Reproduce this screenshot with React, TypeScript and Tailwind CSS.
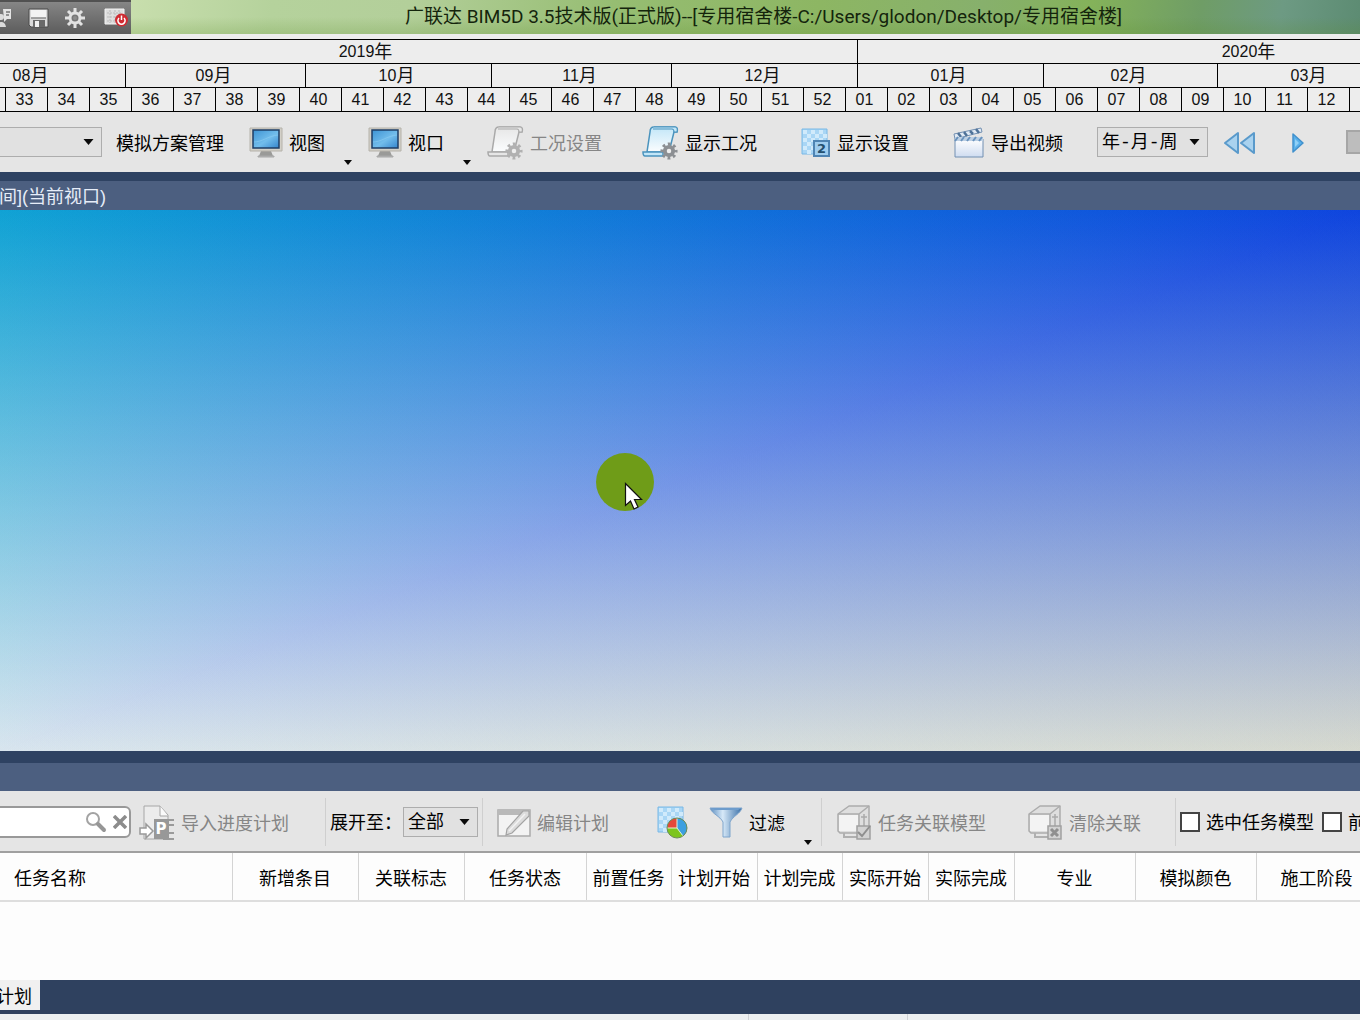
import React, { ReactNode, useState } from 'react';
import clsx from 'clsx';

const cjk = "font-['Liberation_Sans','Noto_Sans_CJK_SC',sans-serif]";

// one day is 6px wide on the timeline
const months = [
  { label: '08月', width: 'w-[186px]' },
  { label: '09月', width: 'w-[180px]' },
  { label: '10月', width: 'w-[186px]' },
  { label: '11月', width: 'w-[180px]' },
  { label: '12月', width: 'w-[186px]' },
  { label: '01月', width: 'w-[186px]' },
  { label: '02月', width: 'w-[174px]' },
  { label: '03月', width: 'w-[186px]' }
];

const weeks = [
  '32', '33', '34', '35', '36', '37', '38', '39', '40', '41', '42', '43', '44', '45', '46', '47', '48',
  '49', '50', '51', '52', '01', '02', '03', '04', '05', '06', '07', '08', '09', '10', '11', '12', '13'
];

const columns = [
  { label: '任务名称', width: 'w-[232px]', left: true },
  { label: '新增条目', width: 'w-[126px]' },
  { label: '关联标志', width: 'w-[106px]' },
  { label: '任务状态', width: 'w-[122px]' },
  { label: '前置任务', width: 'w-[85px]' },
  { label: '计划开始', width: 'w-[86px]' },
  { label: '计划完成', width: 'w-[85px]' },
  { label: '实际开始', width: 'w-[86px]' },
  { label: '实际完成', width: 'w-[86px]' },
  { label: '专业', width: 'w-[121px]' },
  { label: '模拟颜色', width: 'w-[121px]' },
  { label: '施工阶段', width: 'w-[121px]' }
];

function Gear({ cx, cy, r, color, hole }: { cx: number; cy: number; r: number; color: string; hole: string }) {
  const tooth = (2 * Math.PI * r) / 16;
  return (
    <g>
      <circle cx={cx} cy={cy} r={r} fill="none" stroke={color} strokeWidth={r * 0.45} strokeDasharray={tooth} strokeDashoffset={tooth / 2} />
      <circle cx={cx} cy={cy} r={r * 0.6} fill={hole} stroke={color} strokeWidth={r * 0.55} />
    </g>
  );
}

function PersonIcon() {
  return (
    <svg width="12" height="22" viewBox="0 0 12 22">
      <path d="M3 2h8v10H7l-3 3v-3" fill="#e4e4e4" />
      <path d="M6 5h4M6 8h3" stroke="#777" strokeWidth="1.5" />
      <circle cx="1" cy="10" r="3" fill="#dcdcdc" />
      <path d="M-4 20c0-5 9-8 10 0z" fill="#dcdcdc" />
    </svg>
  );
}

function SaveIcon() {
  return (
    <svg width="22" height="22" viewBox="0 0 22 22">
      <path d="M1 2h19v18H3l-2-2z" fill="#d9d9d9" stroke="#4a4a4a" />
      <path d="M3 3h15v8H3z" fill="#f3f3f3" />
      <path d="M3 11h15" stroke="#8a8a8a" strokeWidth="1.5" />
      <path d="M5 13h12v7H5z" fill="#696969" />
      <path d="M7 14h4v6H7z" fill="#efefef" />
    </svg>
  );
}

function SettingsIcon() {
  return (
    <svg width="22" height="22" viewBox="0 0 22 22">
      <path d="M11 1v20M1 11h20M4 4l14 14M18 4L4 18" stroke="#e2e2e2" strokeWidth="3" />
      <circle cx="11" cy="11" r="5" fill="#777" stroke="#e2e2e2" strokeWidth="3" />
      <circle cx="11" cy="11" r="2" fill="#8c8c8c" />
    </svg>
  );
}

function ExitIcon() {
  return (
    <svg width="24" height="22" viewBox="0 0 24 22">
      <path d="M1 2h19v15H1z" fill="#dedede" stroke="#f3f3f3" />
      <path d="M3 6h15M3 10h15M3 14h15M6 3v13M11 3v13M15 3v13" stroke="#bbb" strokeDasharray="2 1" />
      <circle cx="17.5" cy="13" r="6.5" fill="#cf2b32" />
      <path d="M15 11a3.6 3.6 0 1 0 5 0M17.5 8.5v4.5" fill="none" stroke="#fff" strokeWidth="1.5" />
    </svg>
  );
}

function MonitorIcon() {
  return (
    <svg width="34" height="32" viewBox="0 0 34 32">
      <defs>
        <linearGradient id="screen" x1="0" y1="0" x2="1" y2="1">
          <stop offset="0" stopColor="#3d93d3" />
          <stop offset="0.55" stopColor="#72bdec" />
          <stop offset="1" stopColor="#3484cc" />
        </linearGradient>
      </defs>
      <path d="M12 24h10l2 5H10z" fill="#9a9a98" />
      <path d="M9 29h16v1H9z" fill="#b8b8b8" stroke="#a8a8a8" />
      <path d="M1 1h32v23H1z" fill="#d3d0c8" stroke="#b5b2aa" />
      <path d="M4 3h26v18H4z" fill="url(#screen)" stroke="#1f3e66" strokeWidth="1.5" />
      <path d="M5 15c8 0 14-6 24-7" fill="none" stroke="#8dcdf2" opacity="0.6" />
    </svg>
  );
}

function ScrollIcon({ active }: { active?: boolean }) {
  const stroke = active ? '#4a93bd' : '#a9a9a9';
  const tint = active ? '#c2e6f8' : '#e6e6e6';
  const gradient = active ? 'scroll-on' : 'scroll-off';
  return (
    <svg width="37" height="34" viewBox="0 0 37 34">
      <defs>
        <linearGradient id={gradient} x1="0" y1="0" x2="0" y2="1">
          <stop offset="0" stopColor={tint} />
          <stop offset="1" stopColor="#fbfdfe" />
        </linearGradient>
      </defs>
      <path d="M12 1h21c2 0 3 2 2 5h-3l-5 20H5L8 6c0-3 1-5 4-5z" fill={`url(#${gradient})`} stroke={stroke} strokeWidth="1.5" />
      <path d="M12 1h21c2 0 3 2 2 5h-3c0-2-1-3-2-3H11" fill={tint} stroke={stroke} strokeWidth="1.200" />
      <path d="M1 26h20v4H3c-2 0-2-2-2-4z" fill={tint} stroke={stroke} strokeWidth="1.5" />
      <Gear cx={27} cy={25} r={7} color={active ? '#8c8f93' : '#b1b1b1'} hole="#eee" />
    </svg>
  );
}

function Checker() {
  return (
    <g>
      <path d="M1 1h25v25H1z" fill="#a9d6f5" stroke="#78b8e6" />
      {[0, 1, 2, 3, 4, 5].map(row =>
        [0, 1, 2].map(col => (
          <rect key={`${row}-${col}`} x={2 + col * 8 + (row % 2) * 4} y={2 + row * 4} width="4" height="4" fill="#d0eafb" />
        ))
      )}
    </g>
  );
}

function DisplaySettingsIcon() {
  return (
    <svg width="30" height="30" viewBox="0 0 30 30">
      <Checker />
      <path d="M13 13h15v15H13z" fill="#9fcdef" stroke="#4f84b3" strokeWidth="2" />
      <text x="20.5" y="25" textAnchor="middle" fontSize="13" fontWeight="700" fill="#24506f" className="font-['DejaVu_Sans',sans-serif]">
        2
      </text>
    </svg>
  );
}

function ColorSettingsIcon() {
  return (
    <svg width="32" height="34" viewBox="0 0 32 34">
      <Checker />
      <circle cx="20" cy="22" r="10" fill="#7cc51e" />
      <path d="M20 22V12a10 10 0 0 0-9.800 10z" fill="#e4483a" />
      <path d="M20 22V12a10 10 0 0 1 6 18z" fill="#3c9fe0" />
      <path d="M20 12v10l6 8M20 22H10" fill="none" stroke="#e6f2d8" />
      <circle cx="20" cy="22" r="10" fill="none" stroke="#6c8c5a" />
    </svg>
  );
}

function VideoIcon() {
  return (
    <svg width="32" height="32" viewBox="0 0 32 32">
      <defs>
        <linearGradient id="clap" x1="0" y1="0" x2="0" y2="1">
          <stop offset="0" stopColor="#fff" />
          <stop offset="1" stopColor="#cfdcf0" />
        </linearGradient>
      </defs>
      <path d="M1 7L28 1l1 4L2 12z" fill="#e1eaf4" stroke="#7390b2" />
      <path d="M5 6l3 4M11 5l3 4M17 4l3 3M23 2l3 4" stroke="#4f7298" strokeWidth="2.500" />
      <path d="M2 12h28v18H2z" fill="url(#clap)" stroke="#7390b2" />
      <path d="M2 10h28v4H2z" fill="#bdd0e4" />
      <path d="M5 10l-3 4M11 10l-3 4M17 10l-3 4M23 10l-3 4M29 10l-3 4" stroke="#6a93bd" strokeWidth="2" />
    </svg>
  );
}

function RewindIcon() {
  return (
    <svg width="32" height="24" viewBox="0 0 32 24">
      <path d="M14 2v20L1 12zM30 2v20L17 12z" fill="#a9d2ef" stroke="#5a9acb" strokeWidth="2" strokeLinejoin="round" />
    </svg>
  );
}

function PlayIcon() {
  return (
    <svg width="12" height="20" viewBox="0 0 12 20">
      <path d="M1 1l10 9L1 19z" fill="#58b0ea" stroke="#4191cd" strokeWidth="1.5" strokeLinejoin="round" />
      <path d="M3 6l4 4-4 4z" fill="#8fd0f7" />
    </svg>
  );
}

function SearchIcon() {
  return (
    <svg width="22" height="22" viewBox="0 0 22 22">
      <circle cx="8" cy="8" r="6" fill="#fff" stroke="#a3a3a3" strokeWidth="2" />
      <path d="M13 13l6 6" stroke="#969696" strokeWidth="4" strokeLinecap="round" />
    </svg>
  );
}

function ClearIcon() {
  return (
    <svg width="14" height="14" viewBox="0 0 14 14">
      <path d="M1 1l12 12M13 1L1 13" stroke="#8c8c8c" strokeWidth="3.500" />
    </svg>
  );
}

function ImportIcon() {
  return (
    <svg width="36" height="36" viewBox="0 0 36 36">
      <path d="M5 1h16l8 9v24H5z" fill="#ececec" stroke="#a6a6a6" />
      <path d="M21 1v10h8" fill="#fafafa" stroke="#a6a6a6" />
      <path d="M30 15h5M30 20h5M30 28h5M24 34h11" stroke="#9a9a9a" strokeWidth="2" />
      <path d="M15 14h15v20H15z" fill="#989898" />
      <text x="22" y="29" textAnchor="middle" fontSize="15" fontWeight="700" fill="#fff" className="font-['DejaVu_Sans',sans-serif]">
        P
      </text>
      <path d="M1 23h6v-4l7 7-7 7v-4H1z" fill="#fff" stroke="#999" strokeWidth="1.5" />
    </svg>
  );
}

function EditIcon() {
  return (
    <svg width="34" height="28" viewBox="0 0 34 28">
      <path d="M1 1h32v26H1z" fill="#f3f3f3" stroke="#ababab" strokeWidth="1.5" />
      <path d="M1 1h32v5H1z" fill="#b9b9b9" />
      <path d="M26 2h6v5L15 24l-6 2 1-6z" fill="#dcdcdc" stroke="#a3a3a3" strokeWidth="1.200" />
      <path d="M28 5L12 22" stroke="#f2f2f2" strokeWidth="1.5" />
    </svg>
  );
}

function FilterIcon() {
  return (
    <svg width="34" height="32" viewBox="0 0 34 32">
      <defs>
        <linearGradient id="funnel">
          <stop offset="0" stopColor="#5d8dbf" />
          <stop offset="0.4" stopColor="#d7e9f8" />
          <stop offset="1" stopColor="#3a70a8" />
        </linearGradient>
      </defs>
      <path d="M1 1h32c-2 6-9 8-12 14v15h-7V15C11 9 3 7 1 1z" fill="url(#funnel)" stroke="#7fa5cc" />
      <path d="M2 1h30l-3 2H5z" fill="#6d9ccc" />
    </svg>
  );
}

function CubeIcon({ mark }: { mark: 'check' | 'cross' }) {
  return (
    <svg width="35" height="36" viewBox="0 0 35 36">
      <path d="M1 9L12 1h20v20l-9 7H3l-2-2z" fill="#dedede" stroke="#acacac" strokeWidth="1.5" strokeLinejoin="round" />
      <path d="M1 9h21v18M22 9l10-8" fill="none" stroke="#acacac" strokeWidth="1.5" />
      <path d="M2 10h19v16H2z" fill="#f3f3f3" />
      <path d="M7 28v4h14" fill="none" stroke="#b0b0b0" strokeWidth="2" />
      <path d="M27 9v12M24 12h6" stroke="#aaa" strokeWidth="1.5" />
      <path d="M20 21h13v13H20z" fill="#d2d2d2" stroke="#a0a0a0" strokeWidth="1.500" />
      {mark === 'check' ? (
        <path d="M21 27l4 4 8-10" fill="none" stroke="#8f8f8f" strokeWidth="2" />
      ) : (
        <path d="M23 24l7 7M30 24l-7 7" stroke="#8f8f8f" strokeWidth="3" />
      )}
    </svg>
  );
}

function Caret({ small }: { small?: boolean }) {
  return (
    <svg width={small ? 8 : 11} height={small ? 5 : 6} viewBox="0 0 10 6">
      <path d="M0 0h10L5 6z" fill="#0a0a0a" />
    </svg>
  );
}

type ToolButtonProps = {
  icon?: ReactNode;
  label?: string;
  title?: string;
  disabled?: boolean;
  menu?: boolean;
  className?: string;
};

function ToolButton({ icon, label, title, disabled, menu, className }: ToolButtonProps) {
  return (
    <button
      type="button"
      disabled={disabled}
      aria-label={label ? undefined : title}
      className={clsx('mt-0.5 flex h-12 shrink-0 items-center gap-1.5 whitespace-nowrap', disabled ? 'text-[#868686]' : 'text-black', className)}>
      {icon}
      {label && <span className="pt-0.5">{label}</span>}
      {menu && (
        <span className="ml-[13px] self-end pb-0.5">
          <Caret small />
        </span>
      )}
    </button>
  );
}

function Dropdown({ label, options, className }: { label: string; options: string[]; className?: string }) {
  return (
    <div className={clsx('relative shrink-0', className)}>
      <select
        aria-label={label}
        className="block h-[30px] w-full appearance-none border border-[#adadad] bg-[#e1e1e1] pt-0.5 pl-1 font-['Liberation_Mono','Noto_Sans_CJK_SC',monospace] text-lg leading-6 text-black">
        {options.map(o => (
          <option key={o}>{o}</option>
        ))}
      </select>
      <span className="pointer-events-none absolute inset-y-0 right-2 flex items-center">
        <Caret />
      </span>
    </div>
  );
}

function Separator({ className }: { className?: string }) {
  return <div className={clsx('h-12 w-px shrink-0 bg-[#cfcfcf]', className)} />;
}

function TitleBar() {
  return (
    <header className="flex h-[34px] shrink-0 items-center bg-[linear-gradient(to_bottom,transparent_50%,rgba(90,140,40,0.22)),linear-gradient(100deg,#c9dfae_9%,#b5d29c_20%,#b3cf9a_30%,#96bd72_45%,#8db663_60%,#87b06c_72%,#84b25a_80%,#6f9d66_88%,#6d9a83_94%,#5c8b72)]">
      <div className="flex h-full w-[131px] shrink-0 items-center border-t-2 border-[#515151] bg-linear-to-b from-[#868686] to-[#5c5c5c]">
        <button type="button" aria-label="用户">
          <PersonIcon />
        </button>
        <button type="button" aria-label="保存" className="ml-4">
          <SaveIcon />
        </button>
        <button type="button" aria-label="设置" className="ml-3.5">
          <SettingsIcon />
        </button>
        <button type="button" aria-label="退出" className="ml-4.5">
          <ExitIcon />
        </button>
      </div>
      <h1 className="ml-[274px] font-['Roboto','Noto_Sans_CJK_SC',sans-serif] text-[19px] leading-8 whitespace-nowrap text-[#14240c]">
        广联达 BIM5D 3.5技术版(正式版)--[专用宿舍楼-C:/Users/glodon/Desktop/专用宿舍楼]
      </h1>
    </header>
  );
}

function TimeLabel({ children }: { children: string }) {
  const digits = children.slice(0, -1);
  return (
    <>
      {digits}
      <span className="text-lg leading-5">{children.slice(-1)}</span>
    </>
  );
}

function Timeline() {
  const cell = 'flex h-6 shrink-0 items-center justify-center border-r border-b border-black pr-1';
  return (
    <section aria-label="时间轴" className="shrink-0 overflow-hidden bg-[#ededed] pt-[5px] text-base leading-5 text-[#111]">
      <div className="-ml-[122px] flex border-t border-black">
        <div className={clsx(cell, 'w-[980px]')}>
          <TimeLabel>2019年</TimeLabel>
        </div>
        <div className={clsx(cell, 'w-[786px]')}>
          <TimeLabel>2020年</TimeLabel>
        </div>
      </div>
      <div className="-ml-[60px] flex">
        {months.map(m => (
          <div key={m.label} className={clsx(cell, m.width)}>
            <TimeLabel>{m.label}</TimeLabel>
          </div>
        ))}
      </div>
      <div className="-ml-9 flex">
        {weeks.map(w => (
          <div key={w} className={clsx(cell, 'w-[42px]')}>
            {w}
          </div>
        ))}
      </div>
    </section>
  );
}

function MainToolbar() {
  return (
    <div className="flex h-[60px] shrink-0 items-center bg-[#e5e5e5]">
      <Dropdown label="模拟方案" options={['']} className="-ml-10 w-[142px]" />
      <ToolButton label="模拟方案管理" className="ml-3.5" />
      <ToolButton icon={<MonitorIcon />} label="视图" menu className="ml-[25px]" />
      <ToolButton icon={<MonitorIcon />} label="视口" menu className="ml-4" />
      <ToolButton icon={<ScrollIcon />} label="工况设置" disabled className="ml-4" />
      <ToolButton icon={<ScrollIcon active />} label="显示工况" className="ml-10" />
      <ToolButton icon={<DisplaySettingsIcon />} label="显示设置" className="ml-11" />
      <ToolButton icon={<VideoIcon />} label="导出视频" className="ml-11" />
      <Dropdown label="时间单位" options={['年-月-周', '年-月', '月-周-日']} className="ml-[34px] w-[111px]" />
      <ToolButton icon={<RewindIcon />} title="后退" className="ml-4" />
      <ToolButton icon={<PlayIcon />} title="播放" className="ml-9" />
      <button type="button" aria-label="停止" className="ml-[42px] h-6 w-8 shrink-0 border-2 border-[#a6a6a6] bg-[#bdbdbd]" />
    </div>
  );
}

// The sky is shaded from its four corners over two triangles, one additive layer for each corner.
function Viewport() {
  return (
    <main className="relative isolate min-h-0 flex-1 overflow-hidden">
      <div className="absolute inset-0 isolate bg-black">
        <div className="absolute inset-0 bg-[linear-gradient(to_bottom_right,#10a2d4,#000_50%)] mix-blend-plus-lighter" />
        <div className="absolute inset-0 bg-[linear-gradient(to_right,#000,#0f45de)] mix-blend-plus-lighter" />
        <div className="absolute inset-0 bg-[linear-gradient(to_bottom,#000,#d8e5ee)] mix-blend-plus-lighter" />
      </div>
      <div className="absolute inset-0 isolate bg-black [clip-path:polygon(100%_0,100%_100%,0_100%)]">
        <div className="absolute inset-0 bg-[linear-gradient(to_top_left,#d6d9cf,#000_50%)] mix-blend-plus-lighter" />
        <div className="absolute inset-0 bg-[linear-gradient(to_bottom,#0f45de,#000)] mix-blend-plus-lighter" />
        <div className="absolute inset-0 bg-[linear-gradient(to_right,#d8e5ee,#000)] mix-blend-plus-lighter" />
      </div>
      <div className="absolute top-[243px] left-[596px] size-[58px] rounded-full bg-[#6f9c18]">
        <svg className="absolute top-[29px] left-[28px]" width="20" height="28" viewBox="0 0 20 28">
          <path d="M1.500 1.500v22l5-4.500 3.500 8 4-2-3.500-7.500h7z" fill="#fff" stroke="#111" strokeWidth="1.200" />
        </svg>
      </div>
    </main>
  );
}

function CheckOption({ label, className }: { label: string; className?: string }) {
  const [checked, setChecked] = useState(false);
  return (
    <label className={clsx('flex shrink-0 items-center gap-1.5 whitespace-nowrap', className)}>
      <input
        type="checkbox"
        checked={checked}
        onChange={e => setChecked(e.target.checked)}
        className="size-5 appearance-none border-2 border-[#444] bg-white checked:bg-[#4c5f80]"
      />
      <span className="pt-0.5">{label}</span>
    </label>
  );
}

function PlanToolbar() {
  return (
    <div className="flex h-[62px] shrink-0 items-center border-b-2 border-[#a0a0a0] bg-[#e5e5e5] pt-0.5">
      <div className="-ml-16 flex h-8 w-[195px] shrink-0 items-center gap-1.5 rounded-md border-2 border-[#999] bg-white pr-0.5">
        <input type="text" aria-label="搜索任务" className="min-w-0 flex-1 bg-transparent pl-2 outline-none" />
        <button type="button" aria-label="搜索">
          <SearchIcon />
        </button>
        <button type="button" aria-label="清空">
          <ClearIcon />
        </button>
      </div>
      <ToolButton icon={<ImportIcon />} label="导入进度计划" disabled className="ml-2" />
      <Separator className="ml-9" />
      <span className="ml-1 w-[73px] shrink-0 pt-0.5 whitespace-nowrap">展开至：</span>
      <Dropdown label="展开至" options={['全部', '一级', '二级']} className="w-[75px]" />
      <Separator className="ml-1" />
      <ToolButton icon={<EditIcon />} label="编辑计划" disabled className="ml-3.5" />
      <ToolButton icon={<ColorSettingsIcon />} title="颜色设置" className="ml-12" />
      <ToolButton icon={<FilterIcon />} label="过滤" menu className="ml-5" />
      <Separator className="ml-[9px]" />
      <ToolButton icon={<CubeIcon mark="check" />} label="任务关联模型" disabled className="ml-[15px]" />
      <ToolButton icon={<CubeIcon mark="cross" />} label="清除关联" disabled className="ml-[42px]" />
      <Separator className="ml-[34px]" />
      <CheckOption label="选中任务模型" className="ml-1" />
      <CheckOption label="前置任务模型" className="ml-2" />
    </div>
  );
}

function PlanTable() {
  return (
    <div className="h-[127px] shrink-0 overflow-hidden bg-[#fdfdfd]">
      <table className="w-[1377px] table-fixed border-collapse">
        <thead>
          <tr className="h-12 border-b-2 border-[#dedede]">
            {columns.map(c => (
              <th
                key={c.label}
                scope="col"
                className={clsx('border-r border-[#d4d4d4] pt-1 font-normal whitespace-nowrap', c.width, c.left ? 'pl-3.5 text-left' : 'text-center')}>
                {c.label}
              </th>
            ))}
          </tr>
        </thead>
        <tbody />
      </table>
    </div>
  );
}

export default function App() {
  return (
    <div className={clsx('flex h-screen min-h-[700px] w-full flex-col overflow-hidden text-lg leading-6 text-black', cjk)}>
      <TitleBar />
      <Timeline />
      <MainToolbar />
      <div className="h-[38px] shrink-0 overflow-hidden border-t-[9px] border-[#2e4262] bg-[#4c5f80] text-[#e6edf8]">
        <h2 className="-ml-px pt-1 whitespace-nowrap">间](当前视口)</h2>
      </div>
      <Viewport />
      <div className="h-10 shrink-0 border-t-12 border-[#2e4262] bg-[#4c5f80]" />
      <PlanToolbar />
      <PlanTable />
      <nav className="flex h-[34px] shrink-0 items-start bg-[#2f415f]">
        <button type="button" className="h-[30px] overflow-hidden bg-[#f0f0f0] pt-1 pr-2">
          <span className="-ml-1">计划</span>
        </button>
      </nav>
      <footer className="flex h-1.5 shrink-0 bg-[#eceff1]">
        <div className="w-[749px] border-r border-[#cfd2d6]" />
        <div className="w-[159px] border-r border-[#cfd2d6]" />
      </footer>
    </div>
  );
}
